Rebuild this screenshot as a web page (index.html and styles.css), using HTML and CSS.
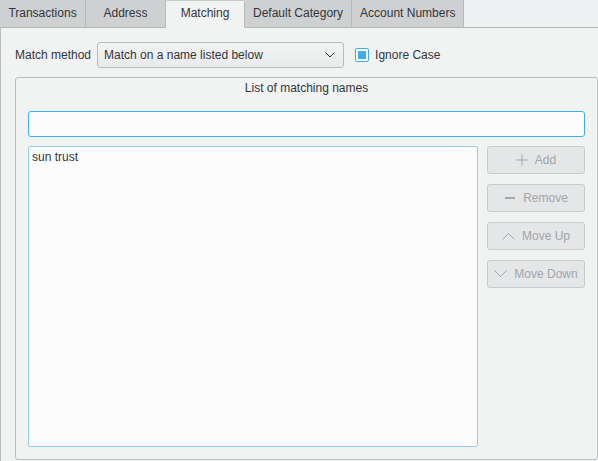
FILE: index.html
```html
<!DOCTYPE html>
<html>
<head>
<meta charset="utf-8">
<link rel="stylesheet" href="styles.css">
</head>
<body>
<div class="window">
  <div class="tabbar">
    <div class="tab">Transactions</div>
    <div class="tab">Address</div>
    <div class="tab active">Matching</div>
    <div class="tab">Default Category</div>
    <div class="tab">Account Numbers</div>
    <div class="tab-fill"></div>
  </div>
  <div class="panel">
    <div class="method-row">
      <span class="label">Match method</span>
      <div class="combo">
        <span>Match on a name listed below</span>
        <svg class="chev" width="10" height="6" viewBox="0 0 10 6"><path d="M0.5 0.5 L5 5 L9.5 0.5" fill="none" stroke="#31363b" stroke-width="1"/></svg>
      </div>
      <div class="check"><div class="check-inner"></div></div>
      <span class="label">Ignore Case</span>
    </div>
    <div class="group">
      <div class="group-title">List of matching names</div>
      <div class="lineedit"></div>
      <div class="list-row">
        <div class="list">
          <div class="item">sun trust</div>
        </div>
        <div class="buttons">
          <div class="btn">
            <svg width="12" height="12" viewBox="0 0 12 12"><path d="M6 0.5 V11.5 M0.5 6 H11.5" stroke="#a5a7a9" stroke-width="1" fill="none"/></svg>
            <span>Add</span>
          </div>
          <div class="btn">
            <svg width="12" height="12" viewBox="0 0 12 12"><path d="M1 6 H11" stroke="#a5a7a9" stroke-width="2" fill="none"/></svg>
            <span>Remove</span>
          </div>
          <div class="btn">
            <svg width="13" height="8" viewBox="0 0 13 8"><path d="M0.5 7.5 L6.5 1.5 L12.5 7.5" stroke="#a5a7a9" stroke-width="1" fill="none"/></svg>
            <span>Move Up</span>
          </div>
          <div class="btn">
            <svg width="13" height="8" viewBox="0 0 13 8"><path d="M0.5 0.5 L6.5 6.5 L12.5 0.5" stroke="#a5a7a9" stroke-width="1" fill="none"/></svg>
            <span>Move Down</span>
          </div>
        </div>
      </div>
    </div>
  </div>
</div>
</body>
</html>
```

FILE: styles.css
```css
* { box-sizing: border-box; }
html, body { margin: 0; padding: 0; }
body {
  width: 598px;
  height: 461px;
  overflow: hidden;
  background: #eff0f1;
  font-family: "Liberation Sans", Arial, sans-serif;
  font-size: 12px;
  color: #31363b;
}
.window {
  display: flex;
  flex-direction: column;
  height: 461px;
}
.tabbar {
  display: flex;
  height: 28px;
  flex-shrink: 0;
}
.tab {
  min-width: 80px;
  padding: 0 8px;
  height: 28px;
  line-height: 27px;
  text-align: center;
  background: #cfd0d1;
  border-right: 1px solid #b7b9ba;
  border-bottom: 1px solid #b4b6b7;
  white-space: nowrap;
}
.tab:first-child { min-width: 86px; }
.tab.active {
  min-width: 79px;
  background: #f1f2f2;
  border-bottom-color: #f1f2f2;
  border-top: 1px solid #c6c8c9;
  line-height: 25px;
  border-radius: 2px 2px 0 0;
}
.tab-fill {
  flex: 1;
  border-bottom: 1px solid #b4b6b7;
  background: #eff0f1;
}
.panel {
  flex: 1;
  background: #f1f2f2;
  border-left: 1px solid #bcbebf;
  display: flex;
  flex-direction: column;
  padding: 14px 0 0 14px;
}
.method-row {
  display: flex;
  align-items: center;
  height: 26px;
}
.combo {
  margin-left: 6px;
  width: 247px;
  height: 26px;
  border: 1px solid #b9bbbd;
  border-radius: 3px;
  background: linear-gradient(#f2f3f3, #e9eaeb);
  display: flex;
  align-items: center;
  justify-content: space-between;
  padding: 0 6px 0 6px;
}
.chev { margin-right: 2px; }
.check {
  margin-left: 11px;
  margin-right: 6px;
  width: 14px;
  height: 14px;
  border: 1px solid #3daee9;
  border-radius: 2px;
  background: #fcfcfc;
  padding: 2px;
}
.check-inner {
  width: 100%;
  height: 100%;
  background: #3daee9;
}
.group {
  margin-top: 9px;
  flex: 1;
  margin-bottom: 1px;
  border: 1px solid #bcbebf;
  border-radius: 3px;
  display: flex;
  flex-direction: column;
  padding: 0 12px 12px 12px;
}
.group-title {
  text-align: center;
  height: 20px;
  line-height: 20px;
}
.lineedit {
  margin-top: 13px;
  height: 26px;
  border: 1px solid #3daee9;
  border-radius: 3px;
  background: #fcfcfc;
  flex-shrink: 0;
}
.list-row {
  margin-top: 9px;
  flex: 1;
  display: flex;
  gap: 9px;
}
.list {
  flex: 1;
  border: 1px solid #93cee9;
  border-radius: 2px;
  background: #fcfcfc;
  padding: 3px 3px;
}
.item { line-height: 15px; }
.buttons {
  width: 98px;
  display: flex;
  flex-direction: column;
  gap: 10px;
}
.btn {
  height: 28px;
  border: 1px solid #c9cbcc;
  border-radius: 3px;
  background: #e5e6e7;
  color: #a3a5a7;
  display: flex;
  align-items: center;
  justify-content: center;
  gap: 7px;
}
```
